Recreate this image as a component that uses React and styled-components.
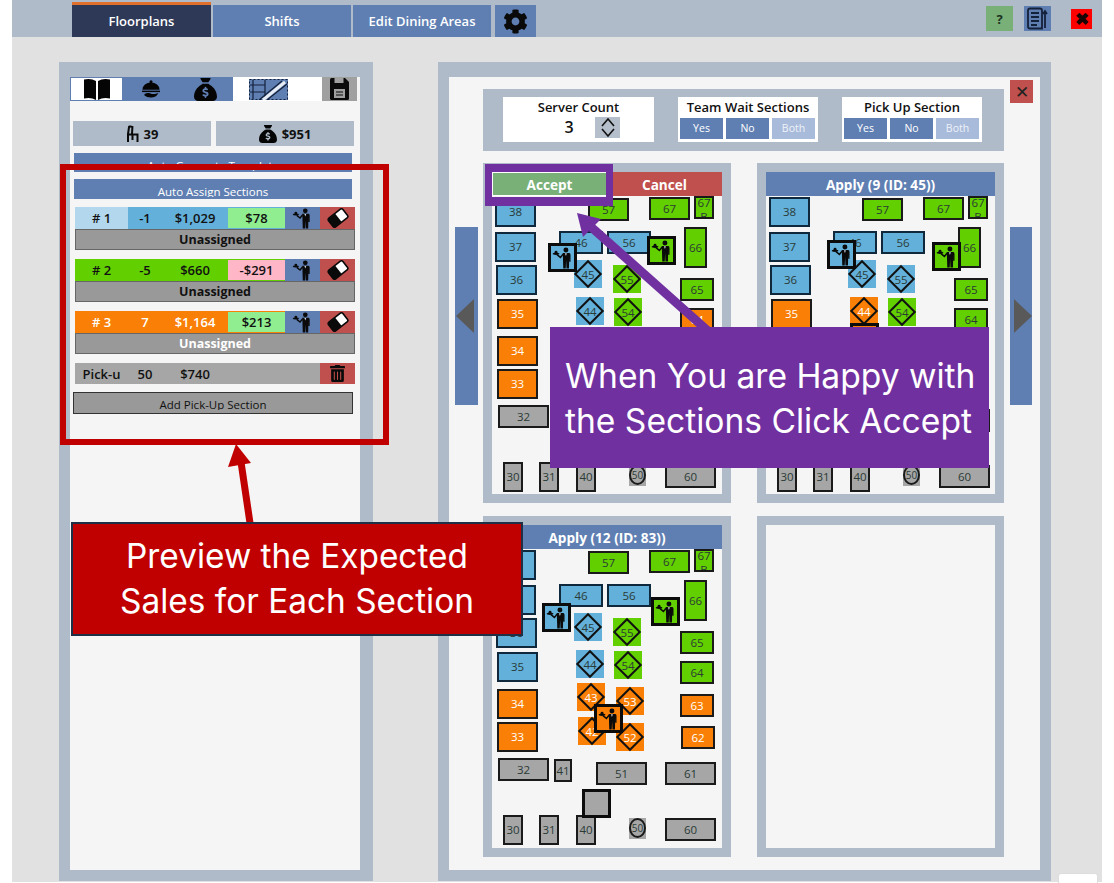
import styled, { createGlobalStyle } from 'styled-components'
import { FaCog, FaTrashAlt } from 'react-icons/fa'
import { FaSackDollar } from 'react-icons/fa6'

const GlobalStyle = createGlobalStyle`
	html, body {
		margin: 0;
		padding: 0;
		background: #fff;
	}
	*, *::before, *::after {
		box-sizing: border-box;
	}
`

const steel = '#afbbc8'
const blue = '#5f7fb3'
const paleBlue = '#a9bbdb'
const brick = '#c0504d'
const sage = '#78b077'
const panel = '#f5f5f5'

const sectionColors = {
	blue: '#63b0da',
	green: '#62d000',
	orange: '#f97f06',
	grey: '#a6a6a6',
}

const Page = styled.div`
	position: relative;
	width: 1114px;
	height: 883px;
	overflow: hidden;
	font-family: "Open Sans", "Noto Sans", sans-serif;
	color: #111;
`
const Frame = styled.div`
	width: 1090px;
	height: 882px;
	margin-left: 12px;
	background: #e1e1e1;
`
const TopBar = styled.div`
	display: flex;
	align-items: flex-end;
	height: 37px;
	padding-left: 60px;
	background: ${steel};
`
const Tab = styled.div`
	display: flex;
	align-items: center;
	justify-content: center;
	width: ${(p) => (p.$active ? '139px' : '138px')};
	height: ${(p) => (p.$active ? '35px' : '32px')};
	margin-right: 2px;
	background: ${(p) => (p.$active ? '#2e3957' : blue)};
	border-top: ${(p) => (p.$active ? '3px solid #e0702c' : 'none')};
	color: #fff;
	font-size: 13px;
	font-weight: 600;
`
const GearTab = styled.div`
	display: flex;
	align-items: center;
	justify-content: center;
	width: 41px;
	height: 32px;
	margin-left: 2px;
	background: ${blue};
	svg {
		width: 25px;
		height: 25px;
		color: #0a0a0a;
	}
`
const TopActions = styled.div`
	display: flex;
	align-items: center;
	align-self: stretch;
	margin-left: auto;
	padding-right: 10px;
`
const HelpButton = styled.div`
	display: flex;
	align-items: center;
	justify-content: center;
	width: 27px;
	height: 25px;
	background: ${sage};
	color: #1d3320;
	font-size: 13px;
	font-weight: 700;
`
const NotesButton = styled.div`
	display: flex;
	align-items: center;
	justify-content: center;
	width: 27px;
	height: 25px;
	margin: 0 20px 0 11px;
	background: ${blue};
`
const ExitButton = styled.div`
	display: flex;
	align-items: center;
	justify-content: center;
	width: 21px;
	height: 20px;
	background: #ff0000;
	color: #1a0505;
	font-size: 17px;
	font-weight: 700;
	line-height: 1;
`
const Main = styled.div`
	display: flex;
	gap: 65px;
	padding: 25px 0 0 47px;
`
const LeftPanel = styled.div`
	width: 314px;
	height: 819px;
	border: solid ${steel};
	border-width: 15px 13px 11px 11px;
	background: ${panel};
`
const Toolbar = styled.div`
	display: flex;
	width: 287px;
	height: 24px;
	margin-bottom: 20px;
	background: #fff;
`
const ToolTab = styled.div`
	display: flex;
	align-items: center;
	justify-content: center;
	width: ${(p) => p.$w}px;
	background: ${(p) => (p.$on ? blue : '#fff')};
	border: ${(p) => (p.$outlined ? `1px solid ${blue}` : 'none')};
`
const SaveTab = styled.div`
	display: flex;
	align-items: center;
	justify-content: center;
	width: 35px;
	margin-left: auto;
	background: #a0a0a0;
`
const Stats = styled.div`
	display: flex;
	gap: 5px;
	margin: 0 6px 7px 3px;
`
const Stat = styled.div`
	display: flex;
	flex: 1;
	align-items: center;
	justify-content: center;
	gap: 5px;
	height: 25px;
	background: ${steel};
	font-size: 13px;
	font-weight: 700;
`
const WideButton = styled.div`
	width: 278px;
	height: ${(p) => p.$h}px;
	margin: 0 0 7px 4px;
	padding-top: 5px;
	overflow: hidden;
	background: ${blue};
	color: #fff;
	font-size: 11.5px;
	line-height: 16px;
	text-align: center;
`
const ClippedLabel = styled.div`
	height: 13px;
	overflow: hidden;
`
const Sections = styled.div`
	display: flex;
	flex-direction: column;
	gap: 9px;
	width: 280px;
	margin: 8px 0 8px 5px;
`
const SectionHead = styled.div`
	display: grid;
	grid-template-columns: 53px 34px 66px 57px 35px 35px;
	height: 22px;
	background: ${(p) => sectionColors[p.$color]};
	color: ${(p) => (p.$color === 'orange' ? '#fff' : '#111')};
	font-size: 13px;
	font-weight: 600;
`
const Cell = styled.div`
	display: flex;
	align-items: center;
	justify-content: center;
	white-space: nowrap;
	background: ${(p) => p.$bg || 'transparent'};
`
const DeltaCell = styled(Cell)`
	margin: 1px 0;
	color: #111;
	background: ${(p) => (p.$bad ? '#ffb6c6' : '#90ee90')};
`
const ActionCell = styled(Cell)`
	background: ${(p) => (p.$danger ? brick : blue)};
`
const Assignee = styled.div`
	height: 21px;
	background: #999;
	border: 1px solid #666;
	color: ${(p) => (p.$light ? '#fff' : '#111')};
	font-size: 12.5px;
	font-weight: 700;
	line-height: 20px;
	text-align: center;
`
const PickupRow = styled(SectionHead)`
	height: 21px;
	background: #a6a6a6;
	color: #111;
`
const AddPickup = styled.div`
	width: 280px;
	height: 22px;
	margin-left: 3px;
	padding-top: 4px;
	overflow: hidden;
	background: #999;
	border: 1px solid #333;
	font-size: 11.5px;
	line-height: 16px;
	text-align: center;
`
const RightPanel = styled.div`
	position: relative;
	display: grid;
	grid-template-columns: 23px 521px 23px;
	column-gap: 5px;
	align-items: start;
	width: 613px;
	height: 819px;
	padding: 12px 0 0 6px;
	border: solid ${steel};
	border-width: 15px 11px 11px 11px;
	background: ${panel};
`
const CloseButton = styled.div`
	position: absolute;
	top: 3px;
	right: 7px;
	display: flex;
	align-items: center;
	justify-content: center;
	width: 23px;
	height: 23px;
	background: ${brick};
	color: #222;
	font-size: 17px;
	line-height: 1;
`
const SideArrow = styled.div`
	display: flex;
	align-items: center;
	justify-content: center;
	height: 178px;
	margin-top: 138px;
	margin-left: ${(p) => (p.$right ? '1px' : '0')};
	background: ${blue};
	&::after {
		content: '';
		border-style: solid;
		border-color: transparent;
		border-width: 17px 0;
		${(p) => (p.$right ? 'border-left: 18px solid #595959; margin-left: 4px;' : 'border-right: 18px solid #595959; margin-right: 4px;')}
	}
`
const Center = styled.div`
	display: flex;
	flex-direction: column;
	gap: 12px;
`
const OptionsBar = styled.div`
	display: flex;
	gap: 24px;
	height: 62px;
	padding: 8px 0 0 20px;
	background: ${steel};
`
const ServerBox = styled.div`
	width: 151px;
	height: 45px;
	padding-top: 1px;
	background: #fff;
	font-size: 13px;
	font-weight: 600;
	text-align: center;
`
const CountRow = styled.div`
	display: flex;
	align-items: center;
`
const CountValue = styled.div`
	width: 92px;
	padding-left: 40px;
	font-size: 16px;
	font-weight: 600;
`
const Stepper = styled.div`
	display: flex;
	align-items: center;
	justify-content: center;
	width: 25px;
	height: 21px;
	background: #b5bfcc;
`
const ChoiceBox = styled.div`
	width: 140px;
	height: 45px;
	padding-top: 1px;
	background: #fff;
	font-size: 13px;
	font-weight: 600;
	text-align: center;
`
const ChoiceButtons = styled.div`
	display: grid;
	grid-template-columns: 43px 43px 43px;
	gap: 3px;
	padding: 2px 2px 1px;
`
const ChoiceButton = styled.div`
	height: 21px;
	background: ${(p) => (p.$off ? paleBlue : blue)};
	color: ${(p) => (p.$off ? '#eef2f8' : '#fff')};
	font-size: 10.5px;
	font-weight: 400;
	line-height: 20px;
`
const CardGrid = styled.div`
	display: grid;
	grid-template-columns: 248px 247px;
	grid-template-rows: 340px 341px;
	gap: 13px 26px;
`
const Card = styled.div`
	display: flex;
	flex-direction: column;
	border: 9px solid ${steel};
	background: ${panel};
`
const CardHeader = styled.div`
	display: flex;
	align-items: center;
	justify-content: center;
	flex: none;
	height: 24px;
	padding-top: 1px;
	background: ${(p) => p.$bg || blue};
	color: #fff;
	font-size: 13.6px;
	font-weight: 700;
`
const AcceptButton = styled(CardHeader)`
	width: 115px;
	background: ${sage};
	border: 1px solid #fff;
`
const CancelButton = styled(CardHeader)`
	flex: 1;
	background: ${brick};
`
const HeaderRow = styled.div`
	display: flex;
`
const Floor = styled.div`
	position: relative;
	flex: 1;
`
const Table = styled.div`
	position: absolute;
	left: ${(p) => p.$x}px;
	top: ${(p) => p.$y}px;
	width: ${(p) => p.$w}px;
	height: ${(p) => p.$h}px;
	overflow: hidden;
	display: flex;
	align-items: center;
	justify-content: center;
	border: 2px solid ${(p) => (p.$color === 'blue' ? '#10283c' : '#1a1a1a')};
	background: ${(p) => sectionColors[p.$color]};
	color: ${(p) => (p.$color === 'orange' ? '#fff' : '#2a3a35')};
	font-size: 11.5px;
	line-height: 14px;
	text-align: center;
`
const TallLabel = styled.div`
	width: 16px;
	margin-top: 5px;
	word-break: break-all;
`
const Diamond = styled.div`
	position: absolute;
	left: ${(p) => p.$x}px;
	top: ${(p) => p.$y}px;
	width: 28px;
	height: 28px;
	display: flex;
	align-items: center;
	justify-content: center;
	background: ${(p) => sectionColors[p.$color]};
	color: ${(p) => (p.$color === 'orange' ? '#fff' : '#2a3a35')};
	font-size: 11.5px;
	&::before {
		content: '';
		position: absolute;
		left: 4px;
		top: 4px;
		width: 20px;
		height: 20px;
		border: 2px solid #111;
		transform: rotate(45deg);
	}
`
const RoundBack = styled.div`
	position: absolute;
	left: ${(p) => p.$x}px;
	top: ${(p) => p.$y}px;
	width: 17px;
	height: 21px;
	display: flex;
	align-items: center;
	justify-content: center;
	background: #a6a6a6;
`
const RoundTable = styled.div`
	display: flex;
	align-items: center;
	justify-content: center;
	width: 17px;
	height: 20px;
	margin-top: -1px;
	border: 2px solid #1a1a1a;
	border-radius: 50%;
	color: #2a3a35;
	font-size: 10px;
`
const WaiterBadge = styled.div`
	position: absolute;
	left: ${(p) => p.$x}px;
	top: ${(p) => p.$y}px;
	width: 29px;
	height: 29px;
	display: flex;
	align-items: center;
	justify-content: center;
	border: 3px solid #0c0c0c;
	background: ${(p) => sectionColors[p.$color]};
`
const RedFrame = styled.div`
	position: absolute;
	left: 60px;
	top: 164px;
	width: 329px;
	height: 281px;
	border: 6px solid #c00000;
`
const PurpleFrame = styled.div`
	position: absolute;
	left: 485px;
	top: 164px;
	width: 128px;
	height: 42px;
	border: solid #7030a0;
	border-width: 8px 7px 9px 7px;
`
const ArrowLayer = styled.svg`
	position: absolute;
	left: 0;
	top: 0;
	width: 1114px;
	height: 883px;
	pointer-events: none;
`
const PurpleCallout = styled.div`
	position: absolute;
	left: 550px;
	top: 327px;
	width: 439px;
	height: 141px;
	padding: 26px 0 0 15px;
	background: #7030a0;
	color: #fff;
	font-family: Inter, "Noto Sans", sans-serif;
	font-size: 33.6px;
	line-height: 45px;
	white-space: nowrap;
`
const RedCallout = styled.div`
	position: absolute;
	left: 71px;
	top: 522px;
	width: 452px;
	height: 114px;
	padding-top: 10px;
	background: #c00000;
	border: 2px solid #1f2f46;
	color: #fff;
	font-family: Inter, "Noto Sans", sans-serif;
	font-size: 33.4px;
	line-height: 45px;
	text-align: center;
	white-space: nowrap;
`
const CornerTab = styled.div`
	position: absolute;
	left: 1058px;
	top: 873px;
	width: 40px;
	height: 20px;
	background: #fff;
	border: 1px solid #ddd;
	border-radius: 3px;
`

const Waiter = ({ size = 22 }) => (
	<svg width={size} height={size} viewBox="0 0 24 24" fill="#0a0a0a">
		<circle cx="15.2" cy="3.2" r="2.7" />
		<ellipse cx="4.4" cy="7.4" rx="3.6" ry="1.2" />
		<circle cx="4.4" cy="5.8" r="1.6" />
		<path d="M11.6 6.6h7.2q1.4.3 1.4 2v7.4h-1.4v-5.5l-.3 13h-2.7l-.4-9-.4 9h-2.7l-.4-13z" />
		<path d="M12 8L9.2 11.4 5.4 8.4" fill="none" stroke="#0a0a0a" strokeWidth="1.6" />
		<path d="M14.2 6.8l1 3 1-3z" fill="#d8dde6" />
	</svg>
)

const Eraser = () => (
	<svg width="22" height="20" viewBox="0 0 24 22">
		<g transform="rotate(-38 12 11)">
			<rect x="2" y="5" width="20" height="12" rx="2" fill="#fff" stroke="#0a0a0a" strokeWidth="1.8" />
			<path d="M4 5h8.5v12H4a2 2 0 0 1-2-2V7a2 2 0 0 1 2-2z" fill="#0a0a0a" />
		</g>
	</svg>
)

const Book = () => (
	<svg width="28" height="22" viewBox="0 0 28 22" fill="#050505">
		<path d="M1 1.5Q8 0 13 3v19Q8 19 1 20.5z" />
		<path d="M27 1.5Q20 0 15 3v19q5-3 12-1.5z" />
	</svg>
)

const Cloche = () => (
	<svg width="20" height="18" viewBox="0 0 24 22" fill="#050505">
		<circle cx="12" cy="2.2" r="1.9" />
		<path d="M1.5 12A10.5 9 0 0 1 22.5 12z" />
		<rect x="1" y="13" width="22" height="1.8" />
		<path d="M4 17q5-2 9 0h4l4-1q-2 5-8 5.5-6 .3-9-2.5z" />
	</svg>
)

const FloorIcon = () => (
	<svg width="39" height="21" viewBox="0 0 39 21">
		<rect width="39" height="21" fill="#5f7fb3" />
		<rect x="0.5" y="0.5" width="38" height="20" fill="none" stroke="#14213a" strokeDasharray="2 2" />
		<path d="M4 1v19M16 1v19M1 6h15M1 13h15" stroke="#14213a" strokeWidth="1.2" fill="none" />
		<path d="M14 21L36 3" stroke="#e8edf5" strokeWidth="3" />
		<path d="M10 21L33 2M18 21L38 5" stroke="#14213a" strokeWidth="1.2" />
	</svg>
)

const Floppy = () => (
	<svg width="19" height="22" viewBox="0 0 19 22">
		<path d="M0 1.5Q0 0 1.5 0H15l4 4v16.5q0 1.5-1.5 1.5h-16Q0 22 0 20.5z" fill="#0a0a0a" />
		<rect x="4.5" y="0" width="9" height="5" fill="#a0a0a0" />
		<rect x="4" y="11" width="11" height="9" fill="#a0a0a0" />
		<path d="M6 14h7M6 17h7" stroke="#0a0a0a" strokeWidth="1.2" />
	</svg>
)

const Chair = () => (
	<svg width="13" height="17" viewBox="0 0 13 17" fill="none" stroke="#0a0a0a" strokeWidth="2">
		<path d="M3.2 1L2 9v8M3.2 1.2L6.4 2 6 9" />
		<path d="M1.5 9.5H12.5M11.5 9.5V17M6.5 9.5V15" />
	</svg>
)

const Notes = () => (
	<svg width="21" height="23" viewBox="0 0 21 23" fill="none" stroke="#14213a" strokeWidth="1.8">
		<path d="M15 21.5H3q-2 0-2-2v-16q0-2 2-2h10q2 0 2 2z" />
		<path d="M4 6h8M4 10h8M4 14h8M4 18h6" />
		<path d="M18 21V5M16 7l2-3 2 3" />
	</svg>
)

const UpDown = () => (
	<svg width="14" height="19" viewBox="0 0 14 19" fill="none" stroke="#111" strokeWidth="1.6">
		<path d="M1 8l6-7 6 7M1 11l6 7 6-7" />
	</svg>
)

const rects = [
	['38', 3, 1, 41, 30], ['37', 3, 36, 41, 30], ['36', 4, 69, 41, 30], ['35', 5, 103, 41, 30],
	['34', 5, 140, 41, 30], ['33', 5, 173, 41, 30], ['32', 6, 209, 51, 23], ['41', 62, 210, 18, 23],
	['51', 104, 213, 51, 23], ['61', 173, 213, 51, 23], ['30', 11, 266, 20, 30], ['31', 47, 266, 20, 30],
	['40', 84, 266, 20, 30], ['60', 173, 269, 51, 23], ['57', 96, 2, 41, 23], ['67', 157, 1, 41, 23],
	['67B', 202, 0, 20, 23], ['46', 67, 35, 44, 23], ['56', 115, 35, 44, 23], ['66', 192, 31, 23, 41],
	['65', 188, 82, 34, 23], ['64', 188, 112, 34, 23], ['63', 188, 145, 34, 23], ['62', 189, 177, 34, 23],
]

const diamonds = [
	['45', 82, 64], ['55', 121, 69], ['44', 84, 101], ['54', 122, 102],
	['43', 85, 134], ['53', 124, 138], ['42', 86, 168], ['52', 124, 174],
]

const plans = [
	{
		blue: ['38', '37', '36', '46', '56', '45', '44'],
		green: ['57', '67', '67B', '66', '65', '55', '54'],
		orange: ['35', '34', '33', '64', '63', '62', '43', '53', '42', '52'],
		waiters: [['orange', 100, 150], ['blue', 56, 47], ['green', 155, 40]],
	},
	{
		blue: ['38', '37', '36', '46', '56', '45', '55'],
		green: ['57', '67', '67B', '66', '65', '64', '54', '63', '62', '53', '52'],
		orange: ['35', '34', '33', '44', '43', '42'],
		waiters: [['orange', 84, 127], ['blue', 61, 44], ['green', 166, 46]],
	},
	{
		blue: ['38', '37', '36', '35', '46', '56', '45', '44'],
		green: ['57', '67', '67B', '66', '65', '64', '55', '54'],
		orange: ['34', '33', '63', '62', '43', '53', '42', '52'],
		waiters: [['blue', 50, 54], ['green', 159, 48], ['orange', 102, 155], ['grey', 90, 240]],
	},
]

const colorOf = (plan, id) => {
	if (plan.blue.includes(id)) return 'blue'
	if (plan.green.includes(id)) return 'green'
	if (plan.orange.includes(id)) return 'orange'
	return 'grey'
}

const FloorPlan = ({ plan }) => (
	<Floor>
		{rects.map(([id, x, y, w, h]) => (
			<Table key={id} $x={x} $y={y} $w={w} $h={h} $color={colorOf(plan, id)}>
				{id === '67B' ? <TallLabel>67 B</TallLabel> : id}
			</Table>
		))}
		<RoundBack $x={137} $y={269}>
			<RoundTable>50</RoundTable>
		</RoundBack>
		{diamonds.map(([id, x, y]) => (
			<Diamond key={id} $x={x} $y={y} $color={colorOf(plan, id)}>{id}</Diamond>
		))}
		{plan.waiters.map(([color, x, y]) => (
			<WaiterBadge key={color} $x={x} $y={y} $color={color}>
				{color !== 'grey' && <Waiter />}
			</WaiterBadge>
		))}
	</Floor>
)

const sections = [
	{ num: '# 1', color: 'blue', diff: '-1', sales: '$1,029', delta: '$78', tag: '#b3d7ec' },
	{ num: '# 2', color: 'green', diff: '-5', sales: '$660', delta: '-$291', bad: true },
	{ num: '# 3', color: 'orange', diff: '7', sales: '$1,164', delta: '$213' },
]

const Choice = ({ title }) => (
	<ChoiceBox>
		{title}
		<ChoiceButtons>
			<ChoiceButton>Yes</ChoiceButton>
			<ChoiceButton>No</ChoiceButton>
			<ChoiceButton $off>Both</ChoiceButton>
		</ChoiceButtons>
	</ChoiceBox>
)

export default function App() {
	return (
		<Page>
			<GlobalStyle />
			<Frame>
				<TopBar>
					<Tab $active>Floorplans</Tab>
					<Tab>Shifts</Tab>
					<Tab>Edit Dining Areas</Tab>
					<GearTab><FaCog /></GearTab>
					<TopActions>
						<HelpButton>?</HelpButton>
						<NotesButton><Notes /></NotesButton>
						<ExitButton>✖</ExitButton>
					</TopActions>
				</TopBar>
				<Main>
					<LeftPanel>
						<Toolbar>
							<ToolTab $w={53} $outlined><Book /></ToolTab>
							<ToolTab $w={55} $on><Cloche /></ToolTab>
							<ToolTab $w={55} $on><FaSackDollar size={23} color="#050505" /></ToolTab>
							<ToolTab $w={70}><FloorIcon /></ToolTab>
							<SaveTab><Floppy /></SaveTab>
						</Toolbar>
						<Stats>
							<Stat><Chair />39</Stat>
							<Stat><FaSackDollar size={18} color="#050505" />$951</Stat>
						</Stats>
						<WideButton $h={19}><ClippedLabel>Auto Generate Template</ClippedLabel></WideButton>
						<WideButton $h={20}><ClippedLabel>Auto Assign Sections</ClippedLabel></WideButton>
						<Sections>
							{sections.map((s) => (
								<div key={s.num}>
									<SectionHead $color={s.color}>
										<Cell $bg={s.tag}>{s.num}</Cell>
										<Cell>{s.diff}</Cell>
										<Cell>{s.sales}</Cell>
										<DeltaCell $bad={s.bad}>{s.delta}</DeltaCell>
										<ActionCell><Waiter size={21} /></ActionCell>
										<ActionCell $danger><Eraser /></ActionCell>
									</SectionHead>
									<Assignee $light={s.color === 'orange'}>Unassigned</Assignee>
								</div>
							))}
							<PickupRow>
								<Cell>Pick-u</Cell>
								<Cell>50</Cell>
								<Cell>$740</Cell>
								<Cell />
								<Cell />
								<ActionCell $danger><FaTrashAlt size={17} color="#0a0a0a" /></ActionCell>
							</PickupRow>
						</Sections>
						<AddPickup><ClippedLabel>Add Pick-Up Section</ClippedLabel></AddPickup>
					</LeftPanel>
					<RightPanel>
						<CloseButton>✕</CloseButton>
						<SideArrow />
						<Center>
							<OptionsBar>
								<ServerBox>
									Server Count
									<CountRow>
										<CountValue>3</CountValue>
										<Stepper><UpDown /></Stepper>
									</CountRow>
								</ServerBox>
								<Choice title="Team Wait Sections" />
								<Choice title="Pick Up Section" />
							</OptionsBar>
							<CardGrid>
								<Card>
									<HeaderRow>
										<AcceptButton>Accept</AcceptButton>
										<CancelButton>Cancel</CancelButton>
									</HeaderRow>
									<FloorPlan plan={plans[0]} />
								</Card>
								<Card>
									<CardHeader>Apply (9 (ID: 45))</CardHeader>
									<FloorPlan plan={plans[1]} />
								</Card>
								<Card>
									<CardHeader>Apply (12 (ID: 83))</CardHeader>
									<FloorPlan plan={plans[2]} />
								</Card>
								<Card />
							</CardGrid>
						</Center>
						<SideArrow $right />
					</RightPanel>
				</Main>
			</Frame>
			<RedFrame />
			<PurpleFrame />
			<PurpleCallout>
				When You are Happy with
				<br />
				the Sections Click Accept
			</PurpleCallout>
			<ArrowLayer viewBox="0 0 1114 883">
				<path d="M708 331L590 226" stroke="#7030a0" strokeWidth="9" />
				<path d="M577 213L601 219L583 237z" fill="#7030a0" />
				<path d="M250 523L241 462" stroke="#c00000" strokeWidth="7" />
				<path d="M236 444L251 463L228 467z" fill="#c00000" />
			</ArrowLayer>
			<RedCallout>
				Preview the Expected
				<br />
				Sales for Each Section
			</RedCallout>
			<CornerTab />
		</Page>
	)
}
